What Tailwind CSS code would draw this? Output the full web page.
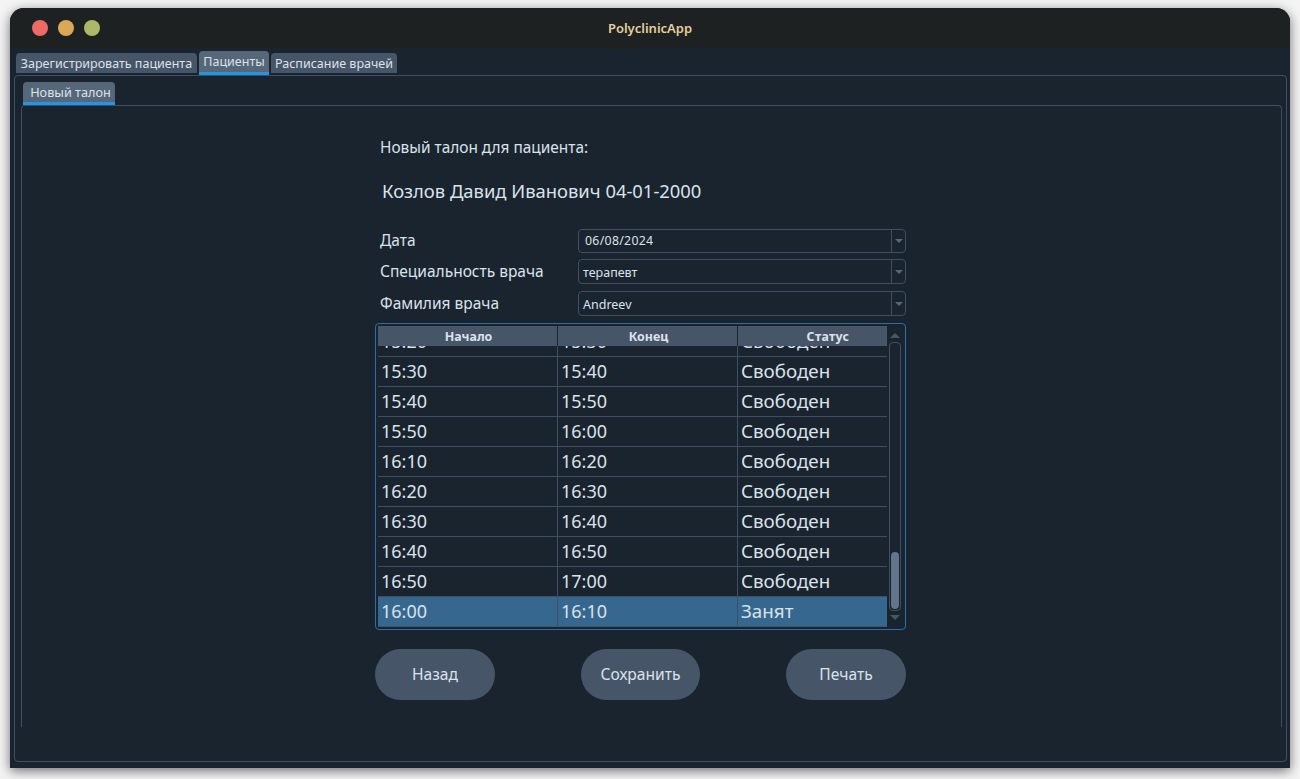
<!DOCTYPE html>
<html lang="en">
<head>
    <meta charset="UTF-8">
    <title>PolyclinicApp</title>
    <script src="https://cdn.jsdelivr.net/npm/@tailwindcss/browser@4"></script>
</head>
<body class="bg-[#f4f4f4] overflow-hidden h-[779px] font-['Noto_Sans','Open_Sans',sans-serif] text-[#dbe2ea]">
    <div class="ml-[10px] mt-[8px] w-[1280px] h-[760px] bg-[#19242f] rounded-t-[14px] shadow-[0_3px_12px_rgba(0,0,0,0.55)] overflow-hidden flex flex-col">
        <!-- Title bar -->
        <header class="relative h-[40px] shrink-0 bg-[#1e2122] flex items-center justify-center">
            <div class="absolute left-[22px] top-[12px] flex gap-[10px]">
                <span class="w-4 h-4 rounded-full bg-[#ee6a67]"></span>
                <span class="w-4 h-4 rounded-full bg-[#dca858]"></span>
                <span class="w-4 h-4 rounded-full bg-[#adb966]"></span>
            </div>
            <h1 class="text-[13px] font-semibold text-[#e5cf9c] pt-[2px]">PolyclinicApp</h1>
        </header>

        <!-- Top tabs -->
        <div class="h-[27px] shrink-0 pl-[6px] pt-[3px] flex items-start gap-[2px] text-[12.5px] leading-none">
            <div class="mt-[2px] w-[181px] h-[20px] pt-[2px] bg-[#475569] rounded-t-[4px] flex items-center justify-center whitespace-nowrap">Зарегистрировать пациента</div>
            <div class="w-[70px] h-[24px] pt-[2px] bg-[#566779] rounded-t-[4px] border-b-[3px] border-[#2196e8] flex items-center justify-center">Пациенты</div>
            <div class="mt-[2px] w-[126px] h-[20px] pt-[2px] bg-[#475569] rounded-t-[4px] flex items-center justify-center whitespace-nowrap">Расписание врачей</div>
        </div>

        <!-- Outer pane -->
        <div class="ml-[4px] w-[1273px] h-[687px] border border-[#3f4e63] rounded-[4px] pl-[6px] pr-[4px]">
            <div class="ml-[2px] mt-[6px] w-[92px] h-[23px] bg-[#566779] rounded-t-[4px] border-b-[3px] border-[#2196e8] flex items-center justify-center pl-[3px] text-[12.7px] leading-none">Новый талон</div>

            <!-- Inner pane -->
            <div class="h-[622px] border-x border-t border-[#3f4e63] rounded-t-[4px] pl-[353px]">
                <div class="w-[531px]">
                    <p class="pl-[5px] pt-[32px] h-[61px] text-[15.4px] leading-[20px]">Новый талон для пациента:</p>
                    <p class="pl-[7px] pt-[12px] h-[62px] text-[18.4px] leading-[24px]">Козлов Давид Иванович 04-01-2000</p>

                    <!-- Form rows -->
                    <div class="h-[24px] flex items-center">
                        <label class="w-[203px] pl-[5px] text-[15.5px]">Дата</label>
                        <div class="w-[328px] h-[24px] border border-[#3f4e63] rounded-[4px] flex items-center">
                            <span class="flex-1 pl-[6px] pt-[1px] text-[12.3px] tracking-[0.3px]">06/08/2024</span>
                            <span class="w-[14px] h-full border-l border-[#3f4e63] flex items-center justify-center"><span class="w-0 h-0 border-x-[4px] border-x-transparent border-t-[4px] border-t-[#566779]"></span></span>
                        </div>
                    </div>
                    <div class="mt-[6px] h-[25px] flex items-center">
                        <label class="w-[203px] pl-[5px] text-[15.5px]">Специальность врача</label>
                        <div class="w-[328px] h-[25px] border border-[#3f4e63] rounded-[4px] flex items-center">
                            <span class="flex-1 pl-[4px] pt-[3px] text-[12.5px]">терапевт</span>
                            <span class="w-[14px] h-full border-l border-[#3f4e63] flex items-center justify-center"><span class="w-0 h-0 border-x-[4px] border-x-transparent border-t-[4px] border-t-[#566779]"></span></span>
                        </div>
                    </div>
                    <div class="mt-[7px] h-[25px] flex items-center">
                        <label class="w-[203px] pl-[5px] text-[15.5px]">Фамилия врача</label>
                        <div class="w-[328px] h-[25px] border border-[#3f4e63] rounded-[4px] flex items-center">
                            <span class="flex-1 pl-[4px] pt-[3px] text-[12.5px]">Andreev</span>
                            <span class="w-[14px] h-full border-l border-[#3f4e63] flex items-center justify-center"><span class="w-0 h-0 border-x-[4px] border-x-transparent border-t-[4px] border-t-[#566779]"></span></span>
                        </div>
                    </div>

                    <!-- Schedule table -->
                    <div class="mt-[7px] w-[531px] h-[307px] border border-[#2b6fa8] rounded-[4px] pl-[2px] pt-[2px] flex">
                        <div class="w-[509px] h-[301px] overflow-hidden relative text-[18px] leading-none">
                            <div class="absolute top-0 left-0 w-full h-[20px] flex gap-[1px] bg-[#19242f] text-[12.4px] font-bold z-10">
                                <div class="w-[179px] bg-[#475569] flex items-center justify-center pt-[3px] pl-[2px]">Начало</div>
                                <div class="w-[179px] bg-[#475569] flex items-center justify-center pt-[3px] pl-[2px]">Конец</div>
                                <div class="flex-1 bg-[#475569] flex items-center justify-center pl-[31px] pt-[3px] tracking-[0.3px]">Статус</div>
                            </div>
                            <div class="mt-[1px] flex flex-col">
                                <div class="grid grid-cols-[180px_180px_149px] h-[30px] shrink-0 border-b border-[#3f4e63] items-center"><span class="pl-[3px] pb-[2px] border-r border-[#3f4e63] h-full flex items-center">15:20</span><span class="pl-[3px] pb-[2px] border-r border-[#3f4e63] h-full flex items-center">15:30</span><span class="pl-[3px] text-[18.8px]">Свободен</span></div>
                                <div class="grid grid-cols-[180px_180px_149px] h-[30px] shrink-0 border-b border-[#3f4e63] items-center"><span class="pl-[3px] pb-[2px] border-r border-[#3f4e63] h-full flex items-center">15:30</span><span class="pl-[3px] pb-[2px] border-r border-[#3f4e63] h-full flex items-center">15:40</span><span class="pl-[3px] text-[18.8px]">Свободен</span></div>
                                <div class="grid grid-cols-[180px_180px_149px] h-[30px] shrink-0 border-b border-[#3f4e63] items-center"><span class="pl-[3px] pb-[2px] border-r border-[#3f4e63] h-full flex items-center">15:40</span><span class="pl-[3px] pb-[2px] border-r border-[#3f4e63] h-full flex items-center">15:50</span><span class="pl-[3px] text-[18.8px]">Свободен</span></div>
                                <div class="grid grid-cols-[180px_180px_149px] h-[30px] shrink-0 border-b border-[#3f4e63] items-center"><span class="pl-[3px] pb-[2px] border-r border-[#3f4e63] h-full flex items-center">15:50</span><span class="pl-[3px] pb-[2px] border-r border-[#3f4e63] h-full flex items-center">16:00</span><span class="pl-[3px] text-[18.8px]">Свободен</span></div>
                                <div class="grid grid-cols-[180px_180px_149px] h-[30px] shrink-0 border-b border-[#3f4e63] items-center"><span class="pl-[3px] pb-[2px] border-r border-[#3f4e63] h-full flex items-center">16:10</span><span class="pl-[3px] pb-[2px] border-r border-[#3f4e63] h-full flex items-center">16:20</span><span class="pl-[3px] text-[18.8px]">Свободен</span></div>
                                <div class="grid grid-cols-[180px_180px_149px] h-[30px] shrink-0 border-b border-[#3f4e63] items-center"><span class="pl-[3px] pb-[2px] border-r border-[#3f4e63] h-full flex items-center">16:20</span><span class="pl-[3px] pb-[2px] border-r border-[#3f4e63] h-full flex items-center">16:30</span><span class="pl-[3px] text-[18.8px]">Свободен</span></div>
                                <div class="grid grid-cols-[180px_180px_149px] h-[30px] shrink-0 border-b border-[#3f4e63] items-center"><span class="pl-[3px] pb-[2px] border-r border-[#3f4e63] h-full flex items-center">16:30</span><span class="pl-[3px] pb-[2px] border-r border-[#3f4e63] h-full flex items-center">16:40</span><span class="pl-[3px] text-[18.8px]">Свободен</span></div>
                                <div class="grid grid-cols-[180px_180px_149px] h-[30px] shrink-0 border-b border-[#3f4e63] items-center"><span class="pl-[3px] pb-[2px] border-r border-[#3f4e63] h-full flex items-center">16:40</span><span class="pl-[3px] pb-[2px] border-r border-[#3f4e63] h-full flex items-center">16:50</span><span class="pl-[3px] text-[18.8px]">Свободен</span></div>
                                <div class="grid grid-cols-[180px_180px_149px] h-[30px] shrink-0 border-b border-[#3f4e63] items-center"><span class="pl-[3px] pb-[2px] border-r border-[#3f4e63] h-full flex items-center">16:50</span><span class="pl-[3px] pb-[2px] border-r border-[#3f4e63] h-full flex items-center">17:00</span><span class="pl-[3px] text-[18.8px]">Свободен</span></div>
                                <div class="grid grid-cols-[180px_180px_149px] h-[30px] shrink-0 border-b border-[#475569] bg-[#36688f] items-center"><span class="pl-[3px] pb-[2px] border-r border-[#3f4e63] h-full flex items-center">16:00</span><span class="pl-[3px] pb-[2px] border-r border-[#3f4e63] h-full flex items-center">16:10</span><span class="pl-[3px] text-[18.8px]">Занят</span></div>
                            </div>
                        </div>
                        <!-- Scrollbar -->
                        <div class="ml-[2px] w-[12px] h-[301px] flex flex-col items-center">
                            <span class="mt-[7px] w-0 h-0 border-x-[5px] border-x-transparent border-b-[5px] border-b-[#475569]"></span>
                            <div class="mt-[4px] w-[12px] h-[269px] shrink-0 border border-[#3f4e63] rounded-[4px] flex flex-col justify-end p-[1px]">
                                <div class="h-[57px] bg-[#64748b] rounded-[4px]"></div>
                            </div>
                            <span class="mt-[4px] w-0 h-0 border-x-[5px] border-x-transparent border-t-[5px] border-t-[#475569]"></span>
                        </div>
                    </div>

                    <!-- Actions -->
                    <div class="mt-[19px] flex justify-between text-[15.6px]">
                        <button class="w-[120px] h-[51px] bg-[#475569] rounded-full">Назад</button>
                        <button class="w-[119px] h-[51px] bg-[#475569] rounded-full">Сохранить</button>
                        <button class="w-[120px] h-[51px] bg-[#475569] rounded-full">Печать</button>
                    </div>
                </div>
            </div>
        </div>
    </div>
</body>
</html>
